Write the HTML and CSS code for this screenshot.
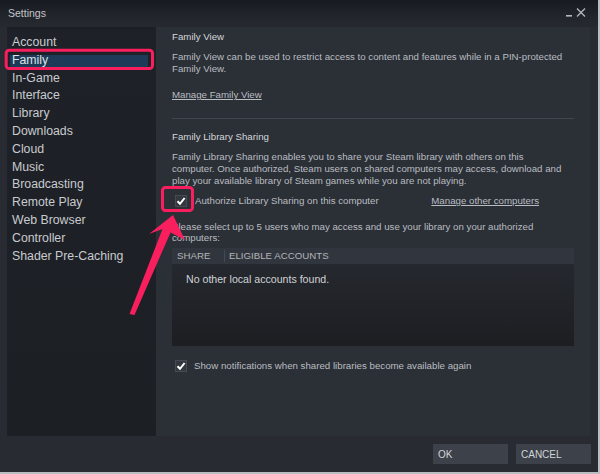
FILE: index.html
```html
<!DOCTYPE html>
<html>
<head>
<meta charset="utf-8">
<title>Settings</title>
<link rel="stylesheet" href="styles.css">
</head>
<body>
<div class="window">
  <div class="titlebar">
    <span class="title">Settings</span>
    <svg class="controls" width="24" height="12" viewBox="0 0 24 12">
      <rect x="0" y="7" width="6" height="1.6" fill="#b4b8bc"/>
      <path d="M11 0.5 L19 8.5 M19 0.5 L11 8.5" stroke="#b4b8bc" stroke-width="1.3" fill="none"/>
    </svg>
  </div>
  <div class="main">
    <nav class="sidebar">
      <div class="nav-item">Account</div>
      <div class="nav-item selected">Family</div>
      <div class="nav-item">In-Game</div>
      <div class="nav-item">Interface</div>
      <div class="nav-item">Library</div>
      <div class="nav-item">Downloads</div>
      <div class="nav-item">Cloud</div>
      <div class="nav-item">Music</div>
      <div class="nav-item">Broadcasting</div>
      <div class="nav-item">Remote Play</div>
      <div class="nav-item">Web Browser</div>
      <div class="nav-item">Controller</div>
      <div class="nav-item">Shader Pre-Caching</div>
    </nav>
    <section class="content">
      <div class="heading">Family View</div>
      <p class="para para-fv">Family View can be used to restrict access to content and features while in a PIN-protected Family View.</p>
      <a class="link link-fv">Manage Family View</a>
      <div class="separator"></div>
      <div class="heading heading-fls">Family Library Sharing</div>
      <p class="para para-fls">Family Library Sharing enables you to share your Steam library with others on this computer. Once authorized, Steam users on shared computers may access, download and play your available library of Steam games while you are not playing.</p>
      <div class="check-row check-auth">
        <span class="checkbox"><svg width="10" height="10" viewBox="0 0 10 10"><path d="M1.5 5.2 L4 7.8 L8.6 2" stroke="#ffffff" stroke-width="2" fill="none"/></svg></span>
        <span class="check-label">Authorize Library Sharing on this computer</span>
        <a class="link link-other">Manage other computers</a>
      </div>
      <p class="para para-select">Please select up to 5 users who may access and use your library on your authorized computers:</p>
      <div class="table">
        <div class="table-head">
          <span class="col-share">SHARE</span>
          <span class="col-div"></span>
          <span class="col-accounts">ELIGIBLE ACCOUNTS</span>
        </div>
        <div class="table-body">No other local accounts found.</div>
      </div>
      <div class="check-row check-notify">
        <span class="checkbox"><svg width="10" height="10" viewBox="0 0 10 10"><path d="M1.5 5.2 L4 7.8 L8.6 2" stroke="#ffffff" stroke-width="2" fill="none"/></svg></span>
        <span class="check-label">Show notifications when shared libraries become available again</span>
      </div>
    </section>
  </div>
  <div class="footer">
    <button class="btn">OK</button>
    <button class="btn">CANCEL</button>
  </div>
</div>
<svg class="annotations" width="600" height="474" viewBox="0 0 600 474">
  <rect x="6.2" y="50.2" width="146.3" height="18.3" rx="3" ry="3" fill="none" stroke="#f91f5f" stroke-width="3"/>
  <rect x="162.5" y="187.5" width="30" height="23" rx="3" ry="3" fill="none" stroke="#f91f5f" stroke-width="3"/>
  <polygon points="173,215 185,240 170.5,232.5 134.5,315 129.5,314 162.5,229 149,234" fill="#f91f5f"/>
</svg>
</body>
</html>
```
FILE: styles.css
```css
html, body {
  margin: 0;
  padding: 0;
}
body {
  width: 600px;
  height: 474px;
  background: #b9bdc1;
  font-family: "Liberation Sans", Arial, sans-serif;
  position: relative;
  overflow: hidden;
}
.window {
  width: 598px;
  height: 472px;
  background: #282b32;
  display: flex;
  flex-direction: column;
}
.titlebar {
  height: 27px;
  flex: none;
  background: linear-gradient(#171a20, #22252c 60%, #262930);
  display: flex;
  align-items: flex-start;
  justify-content: space-between;
  box-sizing: border-box;
  padding: 7px 8px 0 8px;
}
.title {
  color: #c3c6ca;
  font-size: 10.5px;
  line-height: 12px;
}
.controls {
  margin-top: 1px;
}
.main {
  flex: none;
  height: 409px;
  display: flex;
  padding: 0 8px 0 7px;
}
.sidebar {
  width: 149px;
  flex: none;
  background: linear-gradient(#1c1f25, #1e2127 6px, #1c1f24);
  padding-top: 7px;
  box-sizing: border-box;
}
.nav-item {
  font-size: 12.3px;
  line-height: 17.8px;
  height: 17.8px;
  color: #c8cbcf;
  padding-left: 2px;
  margin: 0 8px 0 3px;
  white-space: nowrap;
}
.nav-item.selected {
  background: linear-gradient(transparent 3px, #1d3a58 3px, #1d3a58 15px, transparent 15px);
  color: #dfe3e6;
}
.content {
  flex: 1;
  background: #2b2f36;
  padding: 4px 16px 0 16px;
  box-sizing: border-box;
  color: #b9bdc1;
  font-size: 9.7px;
  line-height: 12px;
}
.heading {
  color: #d4d7da;
  line-height: 12px;
}
.para {
  margin: 0;
}
.para-fv {
  margin-top: 7.7px;
}
.link {
  display: block;
  text-decoration: underline;
  color: #b9bdc1;
}
.link-fv {
  margin-top: 14.3px;
}
.separator {
  height: 1px;
  background: #40444c;
  margin-top: 17px;
}
.heading-fls {
  margin-top: 12px;
}
.para-fls {
  margin-top: 8px;
  max-width: 395px;
}
.check-row {
  display: flex;
  align-items: center;
  height: 12px;
}
.check-auth {
  margin-top: 8px;
}
.checkbox {
  width: 12px;
  height: 12px;
  box-sizing: border-box;
  background: #33373e;
  border: 1px solid #464a52;
  display: flex;
  align-items: center;
  justify-content: center;
  margin-left: 3px;
  flex: none;
}
.check-label {
  margin-left: 8px;
  color: #b9bdc1;
}
.link-other {
  margin-left: auto;
  margin-right: 35px;
}
.para-select {
  margin-top: 14px;
  line-height: 11px;
}
.table {
  margin-top: 5px;
}
.table-head {
  height: 16px;
  background: #31353d;
  display: flex;
  align-items: center;
  color: #b1b5b9;
}
.col-share {
  margin-left: 5px;
  width: 47px;
}
.col-div {
  width: 1px;
  height: 12px;
  background: #454951;
}
.col-accounts {
  margin-left: 4px;
}
.table-body {
  height: 82px;
  background: linear-gradient(#25282e, #1c1e22);
  box-sizing: border-box;
  padding: 9px 0 0 14px;
  color: #d0d3d6;
  font-size: 10.6px;
  line-height: 13px;
}
.check-notify {
  margin-top: 14px;
}
.check-notify .check-label {
  margin-left: 7px;
}
.footer {
  flex: none;
  height: 36px;
  display: flex;
  justify-content: flex-end;
  align-items: flex-start;
  gap: 8px;
  padding: 8px 7px 0 0;
  box-sizing: border-box;
  background: #282b31;
}
.btn {
  width: 75px;
  height: 20px;
  border: none;
  background: #3c414a;
  color: #d2d5d8;
  font-family: "Liberation Sans", Arial, sans-serif;
  font-size: 10px;
  text-align: left;
  padding: 0 0 0 5px;
  margin: 0;
}
.annotations {
  position: absolute;
  left: 0;
  top: 0;
  pointer-events: none;
}
```
